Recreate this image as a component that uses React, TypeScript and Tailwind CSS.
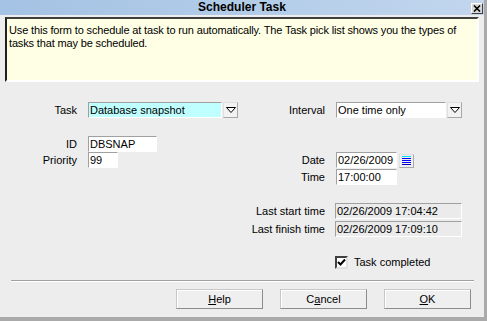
import React from "react";

const sunken =
  "border border-t-[#a0a0a0] border-l-[#a0a0a0] border-r-white border-b-white";

function DropBtn() {
  return (
    <div className="w-[15px] h-[16px] bg-[#f2f2f2] border border-t-[#e0e0e0] border-l-[#e0e0e0] border-r-[#a8a8a8] border-b-[#a8a8a8] flex items-center justify-center">
      <svg width="10" height="6" viewBox="0 0 10 6">
        <polygon points="0.5,0.5 9.5,0.5 5,5.5" fill="white" stroke="black" strokeWidth="1" />
      </svg>
    </div>
  );
}

function Field({ w, text, bg = "bg-white" }: { w: string; text: string; bg?: string }) {
  return (
    <div className={`${w} h-[16px] ${bg} ${sunken} flex items-center pl-[1px] leading-[13px] whitespace-nowrap overflow-hidden`}>
      {text}
    </div>
  );
}

function PushBtn({ children }: { children: React.ReactNode }) {
  return (
    <div className="w-[87px] h-[20px] bg-[#efefef] border border-t-[#c8c8c8] border-l-[#c8c8c8] border-r-[#8c8c8c] border-b-[#8c8c8c] shadow-[inset_1px_1px_0_#ffffff] flex items-center justify-center leading-[13px]">
      {children}
    </div>
  );
}

export default function App() {
  return (
    <div className="w-[487px] h-[321px] bg-[#ededed] border-r-[3px] border-b-[4px] border-[#aaaaaa] flex flex-col font-['Liberation_Sans',Arial,sans-serif] text-[11px] text-black overflow-hidden">
      {/* Title bar */}
      <div className="relative h-[15px] bg-gradient-to-r from-[#a4c2e4] via-[#b2cce8] to-[#c2d6ee] flex items-center justify-center">
        <span className="font-bold text-[12px] leading-[15px]">Scheduler Task</span>
        <div className="absolute right-[1px] top-[3px] w-[12px] h-[11px] bg-[#d8d8d8] border border-t-white border-l-white border-r-[#404040] border-b-[#404040] flex items-center justify-center">
          <svg width="8" height="7" viewBox="0 0 8 7">
            <path d="M1 0.5 L7 6.5 M7 0.5 L1 6.5" stroke="black" strokeWidth="1.6" />
          </svg>
        </div>
      </div>

      {/* Info box */}
      <div className="mt-[2px] ml-[5px] w-[474px] h-[65px] bg-[#ffffe6] border-2 border-t-[#404040] border-l-[#202020] border-r-white border-b-white pl-[2px] pt-[5px] leading-[13px] tracking-[-0.15px]">
        Use this form to schedule at task to run automatically. The Task pick list shows you the types of
        <br />
        tasks that may be scheduled.
      </div>

      {/* Form */}
      <div className="flex mt-[20px]">
        {/* Left column */}
        <div className="w-[250px] flex flex-col">
          <div className="flex items-center h-[16px]">
            <div className="w-[77px] text-right">Task</div>
            <div className="ml-[11px] flex gap-[1px]">
              <Field w="w-[134px]" text="Database snapshot" bg="bg-[#c0ffff]" />
              <DropBtn />
            </div>
          </div>
          <div className="flex items-center h-[16px] mt-[18px]">
            <div className="w-[77px] text-right">ID</div>
            <div className="ml-[11px]">
              <Field w="w-[69px]" text="DBSNAP" />
            </div>
          </div>
          <div className="flex items-center h-[16px]">
            <div className="w-[77px] text-right">Priority</div>
            <div className="ml-[11px]">
              <Field w="w-[30px]" text="99" />
            </div>
          </div>
        </div>

        {/* Right column */}
        <div className="flex-1 flex flex-col">
          <div className="flex items-center h-[16px]">
            <div className="w-[75px] text-right">Interval</div>
            <div className="ml-[11px] flex gap-[1px]">
              <Field w="w-[110px]" text="One time only" />
              <DropBtn />
            </div>
          </div>
          <div className="flex items-center h-[16px] mt-[34px]">
            <div className="w-[75px] text-right">Date</div>
            <div className="ml-[11px] flex items-end gap-[2px]">
              <Field w="w-[61px]" text="02/26/2009" />
              <div className="w-[15px] h-[14px] bg-[#f0f0f0] border border-t-[#e0e0e0] border-l-[#e0e0e0] border-r-[#a8a8a8] border-b-[#a8a8a8] flex items-center justify-center">
                <svg width="9" height="10" viewBox="0 0 9 10">
                  <rect x="0" y="0" width="9" height="1" fill="#00e0ff" />
                  <rect x="0" y="2" width="9" height="1" fill="#0000ff" />
                  <rect x="0" y="4" width="9" height="1" fill="#0000ff" />
                  <rect x="0" y="6" width="9" height="1" fill="#0000ff" />
                  <rect x="0" y="8" width="9" height="1" fill="#0000c0" />
                </svg>
              </div>
            </div>
          </div>
          <div className="flex items-center h-[16px] mt-[1px]">
            <div className="w-[75px] text-right">Time</div>
            <div className="ml-[11px]">
              <Field w="w-[61px]" text="17:00:00" />
            </div>
          </div>
          <div className="flex items-center h-[16px] mt-[18px]">
            <div className="w-[75px] text-right">Last start time</div>
            <div className="ml-[10px]">
              <Field w="w-[127px]" text="02/26/2009 17:04:42" bg="bg-[#ebebeb]" />
            </div>
          </div>
          <div className="flex items-center h-[16px] mt-[2px]">
            <div className="w-[75px] text-right whitespace-nowrap">Last finish time</div>
            <div className="ml-[10px]">
              <Field w="w-[127px]" text="02/26/2009 17:09:10" bg="bg-[#ebebeb]" />
            </div>
          </div>
          <div className="flex items-center h-[13px] mt-[19px] ml-[85px]">
            <div className="w-[13px] h-[13px] bg-white border-2 border-t-[#404040] border-l-[#404040] border-r-[#e0e0e0] border-b-[#e0e0e0] flex items-center justify-center">
              <svg width="9" height="9" viewBox="0 0 9 9">
                <path d="M1 4 L3.5 6.5 L8 1.5" fill="none" stroke="black" strokeWidth="2" />
              </svg>
            </div>
            <span className="ml-[6px] leading-[13px]">Task completed</span>
          </div>
        </div>
      </div>

      {/* Separator */}
      <div className="mt-[11px] ml-[11px] w-[463px] h-[2px] border-t border-t-[#a0a0a0] border-b border-b-white" />

      {/* Buttons */}
      <div className="mt-[7px] flex justify-end gap-[17px] pr-[13px]">
        <PushBtn>
          <span><span className="underline">H</span>elp</span>
        </PushBtn>
        <PushBtn>
          <span>C<span className="underline">a</span>ncel</span>
        </PushBtn>
        <PushBtn>
          <span><span className="underline">O</span>K</span>
        </PushBtn>
      </div>
    </div>
  );
}
